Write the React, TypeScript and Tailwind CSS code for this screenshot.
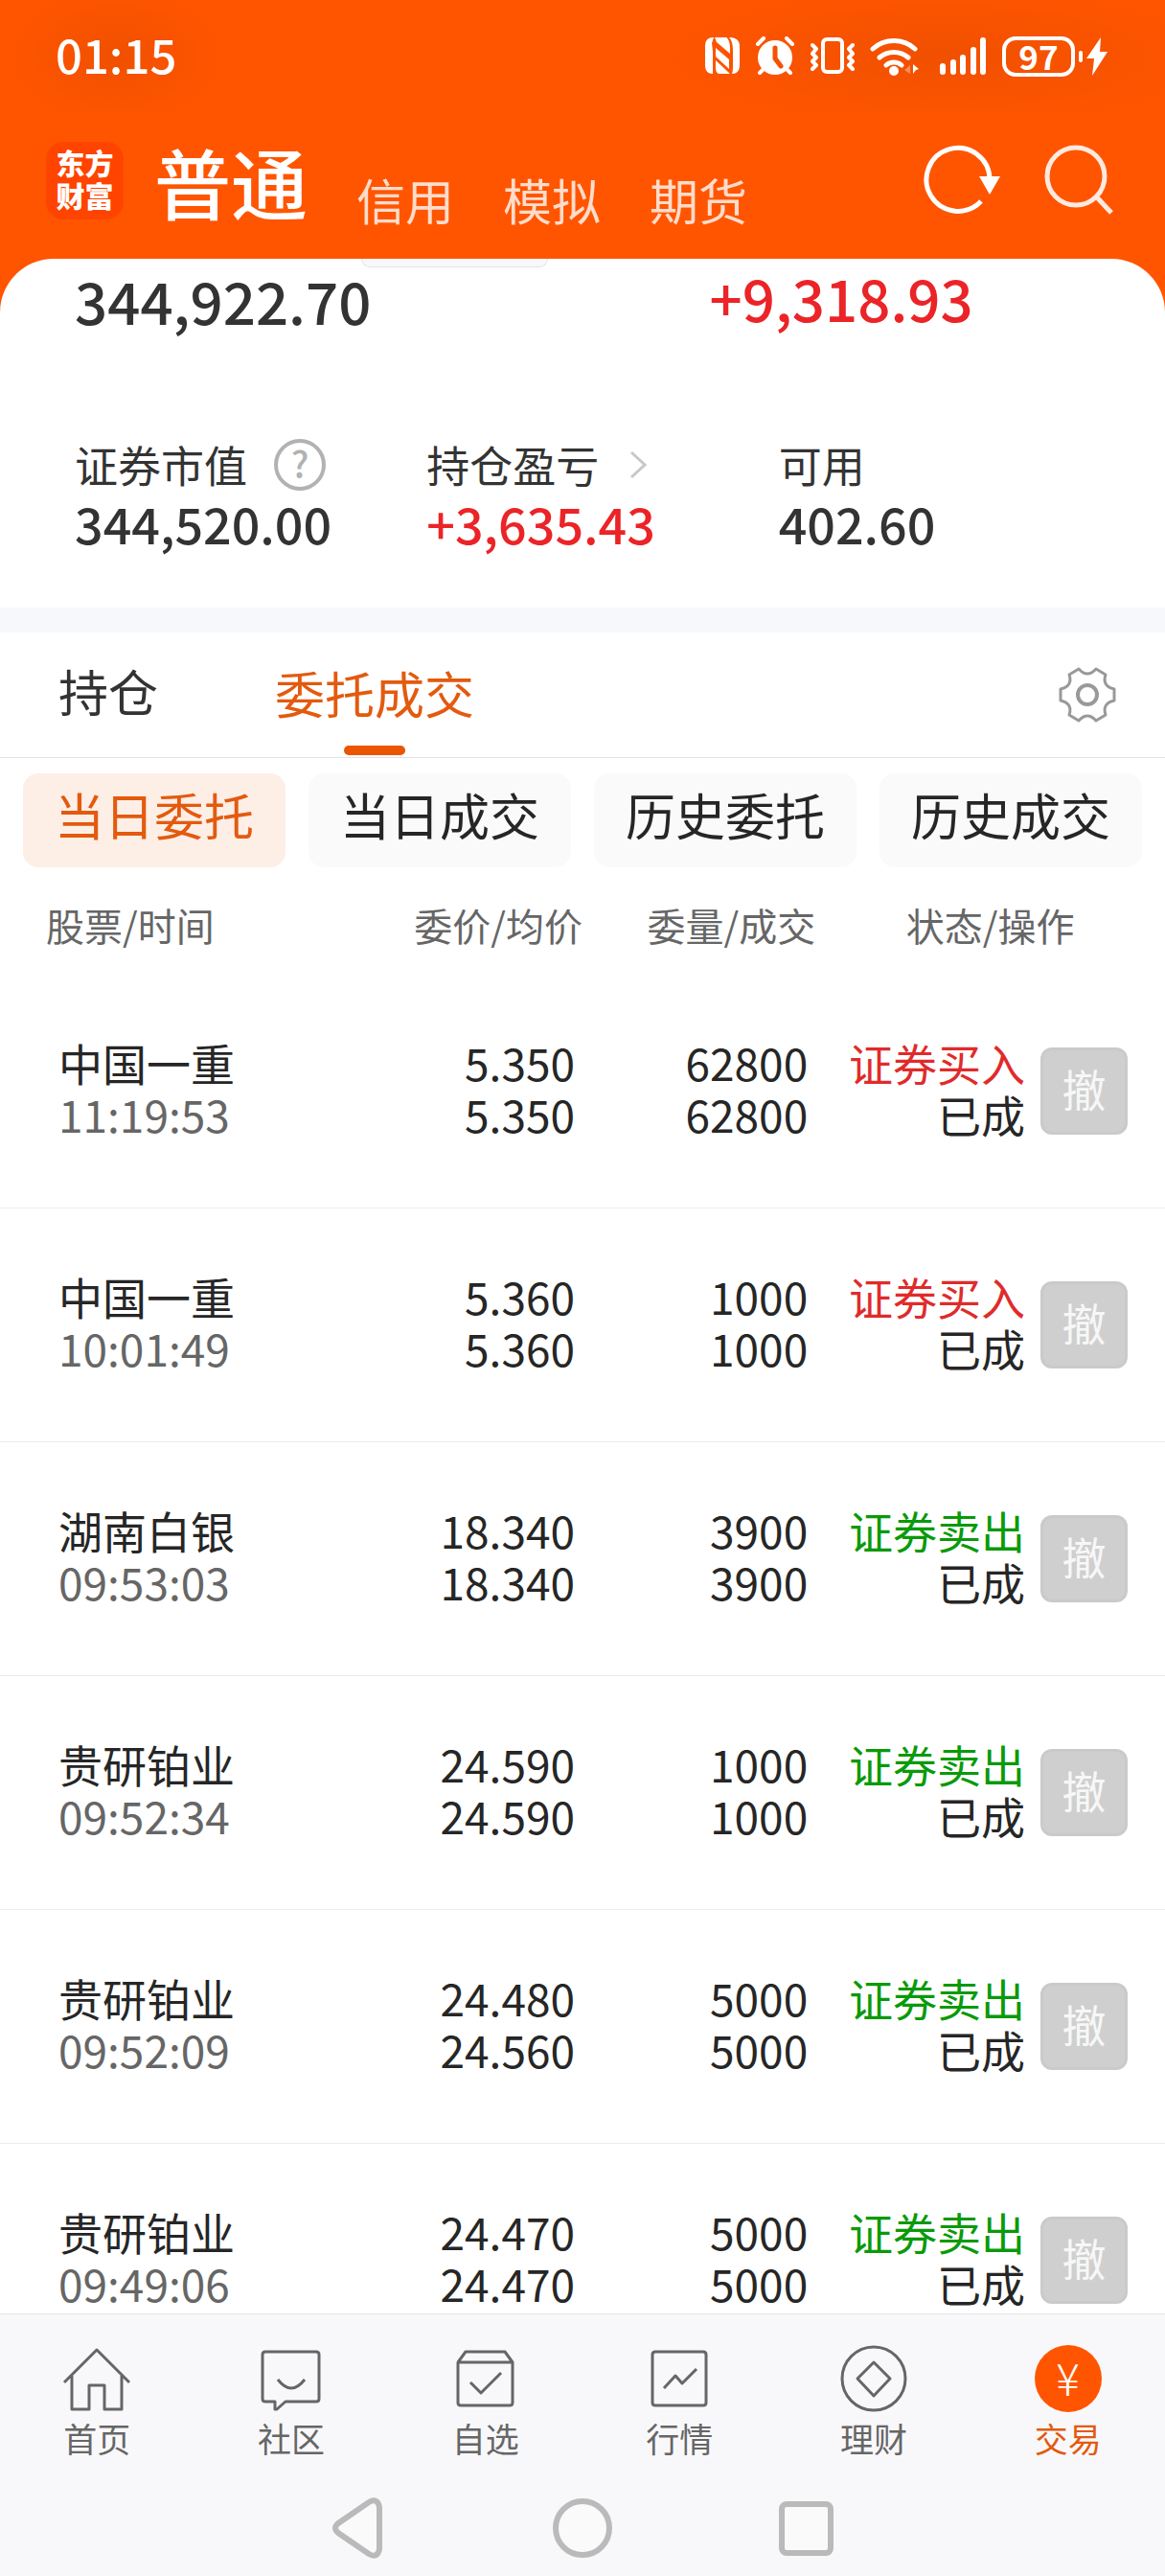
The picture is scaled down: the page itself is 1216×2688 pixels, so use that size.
import type { ReactNode } from "react";
import clsx from "clsx";

type Order = {
  name: string;
  time: string;
  price: string;
  average: string;
  amount: string;
  filled: string;
  side: "buy" | "sell";
};

const orders: Order[] = [
  { name: "中国一重", time: "11:19:53", price: "5.350", average: "5.350", amount: "62800", filled: "62800", side: "buy" },
  { name: "中国一重", time: "10:01:49", price: "5.360", average: "5.360", amount: "1000", filled: "1000", side: "buy" },
  { name: "湖南白银", time: "09:53:03", price: "18.340", average: "18.340", amount: "3900", filled: "3900", side: "sell" },
  { name: "贵研铂业", time: "09:52:34", price: "24.590", average: "24.590", amount: "1000", filled: "1000", side: "sell" },
  { name: "贵研铂业", time: "09:52:09", price: "24.480", average: "24.560", amount: "5000", filled: "5000", side: "sell" },
  { name: "贵研铂业", time: "09:49:06", price: "24.470", average: "24.470", amount: "5000", filled: "5000", side: "sell" },
];

const filters = ["当日委托", "当日成交", "历史委托", "历史成交"];

const StatusIcons = () => (
  <div className="flex items-center gap-4 text-white">
    <svg width="36" height="42" viewBox="0 0 36 42" fill="currentColor">
      <path d="M9 1C3 1 0 4 0 10v20c0 6 3 9 8 9V16l-1-9Z" />
      <path d="M10 1h12c3 2 4 6 4 13v4L12 6Z" />
      <path d="M11 12l14 12v10L11 21Z" />
      <path d="M11 25l15 14H14c-2-1-3-3-3-6Z" />
      <path d="M25 1c7 0 11 3 11 9v20c0 6-3 9-8 9 1-3 1-6 1-10V15c0-6-1-11-4-14Z" />
    </svg>
    <svg width="42" height="42" viewBox="0 0 42 42">
      <circle cx="21" cy="22" r="18" fill="currentColor" />
      <g stroke="currentColor" strokeWidth="4" strokeLinecap="round">
        <path d="M3 8l6-6M39 8l-6-6M9 34l-4 4M33 34l4 4" />
      </g>
      <path d="M21 12v11l6 8" fill="none" stroke="#f55100" strokeWidth="5" strokeLinecap="round" strokeLinejoin="round" />
    </svg>
    <svg width="46" height="42" viewBox="0 0 46 42" fill="none" stroke="currentColor" strokeLinecap="round" strokeLinejoin="round">
      <rect x="13" y="3" width="20" height="34" rx="4" strokeWidth="4" />
      <path d="M2 9l4 4-4 5 4 4-4 4 4 4-4 4M44 9l-4 4 4 5-4 4 4 4-4 4 4 4" strokeWidth="4" />
    </svg>
    <svg width="56" height="42" viewBox="0 0 56 42" fill="none" stroke="currentColor" strokeWidth="5" strokeLinecap="round">
      <path d="M3 13a33 33 0 0 1 44 0M10 22a23 23 0 0 1 30 0M17 30a12 12 0 0 1 16 0" />
      <circle cx="25" cy="36" r="5" fill="currentColor" stroke="none" />
      <path d="M42 30v9l-6-4Z" fill="currentColor" stroke="none" opacity="0.35" />
      <path d="M45 29l6 5-3 1-3 4Z" fill="currentColor" stroke="none" />
    </svg>
    <svg width="50" height="42" viewBox="0 0 50 42" stroke="currentColor" strokeWidth="6" strokeLinecap="round">
      <path d="M4 31v6M15 27v10M25 22v15M36 14v23M46 4v33" />
    </svg>
    <div className="flex items-center gap-1">
      <span className="flex h-[42px] w-[76px] items-center justify-center rounded-[14px] border-4 border-white pb-1 text-[35px] leading-none font-bold">
        97
      </span>
      <span className="h-3 w-1 rounded-full bg-white" />
      <svg width="22" height="42" viewBox="0 0 22 42" fill="currentColor">
        <path d="M15 1L0 23h8L6 41 22 16h-8Z" />
      </svg>
    </div>
  </div>
);

const StatusBar = () => (
  <div className="flex h-[118px] items-center justify-between bg-[radial-gradient(ellipse_110px_70px_at_10%_50%,#f05000,#ff550000),radial-gradient(ellipse_290px_70px_at_81%_50%,#f05000,#ff550000)] pr-[60px] pl-[58px]">
    <time className="pb-2 text-[49px] leading-none font-medium text-white">01:15</time>
    <StatusIcons />
  </div>
);

const Header = () => (
  <header className="flex h-[152px] items-center pr-[54px] pb-3 pl-12 text-white">
    <div className="flex size-[81px] flex-col items-center justify-center rounded-[18px] bg-[#ff4400] pb-1 text-[30px] leading-[34px] font-black">
      <span>东方</span>
      <span>财富</span>
    </div>
    <nav className="ml-8 flex items-end gap-[51px] text-[51px] leading-[48px] text-[#ffdccb]">
      <a href="#normal" className="text-[80px] leading-[88px] font-medium text-white">普通</a>
      <a href="#credit">信用</a>
      <a href="#paper">模拟</a>
      <a href="#futures">期货</a>
    </nav>
    <div className="ml-auto flex gap-[46px]">
      <button type="button" aria-label="刷新">
        <svg width="80" height="74" viewBox="0 0 80 74" fill="none">
          <path d="M69 36A33 33 0 1 0 60 59" stroke="currentColor" strokeWidth="5" />
          <path d="M58 33h22L69 52Z" fill="currentColor" />
        </svg>
      </button>
      <button type="button" aria-label="搜索" className="text-[#ffeae0]">
        <svg width="72" height="74" viewBox="0 0 72 74" fill="none" stroke="currentColor" strokeWidth="5">
          <circle cx="33" cy="33" r="30" />
          <path d="M54 54l16 17" />
        </svg>
      </button>
    </div>
  </header>
);

const Stat = ({ label, value, extra, red }: { label: string; value: string; extra?: ReactNode; red?: boolean }) => (
  <div>
    <div className="flex h-[58px] items-center text-[45px]">
      <span className="leading-[56px]">{label}</span>
      {extra}
    </div>
    <div className={clsx("text-[52px] leading-[64px] font-medium", red && "text-[#eb2427]")}>{value}</div>
  </div>
);

const Assets = () => (
  <section className="relative pt-[11px] pb-14 text-[#333]">
    <div className="absolute top-0 left-[31%] h-[9px] w-[16%] rounded-b-[12px] border border-t-0 border-[#e2e2e4] bg-[#f7f8fb]" />
    <div className="grid grid-cols-[5fr_3fr] px-[78px] text-[60px] font-medium">
      <span className="leading-[64px]">344,922.70</span>
      <span className="leading-[58px] text-[#eb2427]">+9,318.93</span>
    </div>
    <div className="mt-[111px] grid grid-cols-3 pr-9 pl-[78px]">
      <Stat
        label="证券市值"
        value="344,520.00"
        extra={
          <button
            type="button"
            aria-label="证券市值说明"
            className="ml-7 flex size-[54px] items-center justify-center rounded-full border-4 border-[#b2b2b2] pb-1 text-[38px] leading-none font-medium text-[#b2b2b2]"
          >
            ?
          </button>
        }
      />
      <Stat
        label="持仓盈亏"
        value="+3,635.43"
        red
        extra={
          <svg className="ml-8" width="18" height="30" viewBox="0 0 18 30" fill="none" stroke="#c8c8c8" strokeWidth="3">
            <path d="M2 2l14 13L2 28" />
          </svg>
        }
      />
      <Stat label="可用" value="402.60" />
    </div>
  </section>
);

const Tabs = () => (
  <div className="flex h-[131px] items-stretch gap-[122px] border-b border-[#e3e3e3] pr-[51px] pl-[61px] text-[52px] text-[#333]">
    <button type="button" className="pb-2">持仓</button>
    <button type="button" className="relative pb-1 text-[#e35a0e]">
      委托成交
      <span className="absolute bottom-0.5 left-1/2 h-[10px] w-16 -translate-x-1/2 rounded-full bg-[#eb5500]" />
    </button>
    <button type="button" aria-label="设置" className="ml-auto">
      <svg width="60" height="60" viewBox="-30 -30 60 60" fill="none" stroke="#999" strokeWidth="3" strokeLinejoin="round">
        <path d="M28-6V6Q15 9 19 21L9 27Q0 17-9 27L-19 21Q-15 9-28 6V-6Q-15-9-19-21L-9-27Q0-17 9-27L19-21Q15-9 28-6Z" />
        <circle r="10" strokeWidth="4" />
      </svg>
    </button>
  </div>
);

const Filters = () => (
  <div className="grid grid-cols-4 gap-6 px-6 pt-4">
    {filters.map((filter, index) => (
      <button
        key={filter}
        type="button"
        className={clsx(
          "h-[98px] rounded-2xl pb-3 text-[52px] leading-none",
          index === 0 ? "bg-[#fdeee6] text-[#e35a0e]" : "bg-[#fafafa] text-[#262626]",
        )}
      >
        {filter}
      </button>
    ))}
  </div>
);

const Orders = () => (
  <table className="w-full table-fixed border-separate border-spacing-0 text-[46px] leading-[54px] text-[#262626]">
    <colgroup>
      <col className="w-[30%]" />
      <col className="w-[20%]" />
      <col className="w-[20%]" />
      <col className="w-[30%]" />
    </colgroup>
    <thead className="text-[40px] text-[#666]">
      <tr className="h-28">
        <th className="pt-2 pl-12 text-left font-normal">股票/时间</th>
        <th className="pt-2 text-right font-normal">委价/均价</th>
        <th className="pt-2 text-right font-normal">委量/成交</th>
        <th className="pt-2 text-center font-normal">状态/操作</th>
      </tr>
    </thead>
    <tbody>
      {orders.map((order) => (
        <tr key={order.time} className="h-[244px] text-right *:border-b *:border-[#ebebeb]">
          <td className="pb-2 pl-[61px] text-left">
            <div>{order.name}</div>
            <div className="text-[#666]">{order.time}</div>
          </td>
          <td className="pr-2 pb-2">
            <div>{order.price}</div>
            <div>{order.average}</div>
          </td>
          <td className="pr-2 pb-2">
            <div>{order.amount}</div>
            <div>{order.filled}</div>
          </td>
          <td className="pr-[39px]">
            <div className="flex items-center justify-end gap-4">
              <div className="pb-2">
                <div className={order.side === "buy" ? "text-[#e02b2b]" : "text-[#0a9a0a]"}>
                  {order.side === "buy" ? "证券买入" : "证券卖出"}
                </div>
                <div>已成</div>
              </div>
              <button
                type="button"
                disabled
                className="size-[91px] rounded-xl border-3 border-[#cacaca] bg-[#cfcfcf] pb-2 leading-none text-[#f7f7f7]"
              >
                撤
              </button>
            </div>
          </td>
        </tr>
      ))}
    </tbody>
  </table>
);

const navItems = [
  { label: "首页", icon: <path d="M2 40L36 6l34 34M10 33v35h18V43h16v25h18V33" /> },
  {
    label: "社区",
    icon: <path d="M9 8h53q3 0 3 3v46q0 3-3 3H30l-9 8h-2v-8H9q-3 0-3-3V11q0-3 3-3ZM22 37q14 18 28 0" />,
  },
  {
    label: "自选",
    icon: <path d="M7 19L15 8h41l8 11v42q0 3-3 3H10q-3 0-3-3V19h57M20 40l11 11 21-21" />,
  },
  {
    label: "行情",
    icon: <path d="M11 8h50q3 0 3 3v50q0 3-3 3H11q-3 0-3-3V11q0-3 3-3ZM20 46l12-13 7 8 15-15" />,
  },
  {
    label: "理财",
    icon: (
      <>
        <circle cx="36" cy="36" r="33" />
        <path d="M36 19l17 17-17 18-17-18Z" />
      </>
    ),
  },
];

const BottomNav = () => (
  <footer className="border-t border-[#e3e4e6] bg-[#f8f8fb] pt-[31px]">
    <nav className="grid grid-cols-6 text-[35px] leading-10 text-[#666]">
      {navItems.map((item) => (
        <a key={item.label} href={`#${item.label}`} className="flex flex-col items-center gap-1.5">
          <svg width="72" height="72" viewBox="0 0 72 72" fill="none" stroke="currentColor" strokeWidth="3" strokeLinejoin="round">
            {item.icon}
          </svg>
          {item.label}
        </a>
      ))}
      <a href="#交易" aria-current="page" className="flex flex-col items-center gap-1.5 text-[#e35a0e]">
        <span className="flex h-[72px] items-center">
          <span className="flex size-[70px] items-center justify-center rounded-full bg-[#ff5500] pb-1 text-[46px] leading-none font-light text-white">
            ¥
          </span>
        </span>
        交易
      </a>
    </nav>
    <div className="flex h-[124px] items-center justify-center gap-[168px] pt-6">
      <button type="button" aria-label="返回">
        <svg width="66" height="66" viewBox="0 0 66 66" fill="#fafafa" stroke="#bababa" strokeWidth="6">
          <path d="M12 28L44 6Q53 1 55 11V55Q53 65 44 60L12 38Q6 33 12 28Z" />
        </svg>
      </button>
      <button type="button" aria-label="主屏幕">
        <svg width="66" height="66" viewBox="0 0 66 66" fill="#fafafa" stroke="#bababa" strokeWidth="6">
          <circle cx="33" cy="33" r="28" />
        </svg>
      </button>
      <button type="button" aria-label="最近任务">
        <svg width="66" height="66" viewBox="0 0 66 66" fill="#fafafa" stroke="#bababa" strokeWidth="6">
          <rect x="7" y="8" width="51" height="51" rx="5" />
        </svg>
      </button>
    </div>
  </footer>
);

export default function App() {
  return (
    <div className="flex h-screen flex-col bg-[#ff5500] font-['Noto_Sans_CJK_SC',sans-serif]">
      <StatusBar />
      <Header />
      <main className="min-h-0 flex-1 overflow-hidden rounded-t-[56px] bg-white">
        <Assets />
        <div className="h-[26px] bg-[#f6f8fb]" />
        <Tabs />
        <Filters />
        <Orders />
      </main>
      <BottomNav />
    </div>
  );
}
